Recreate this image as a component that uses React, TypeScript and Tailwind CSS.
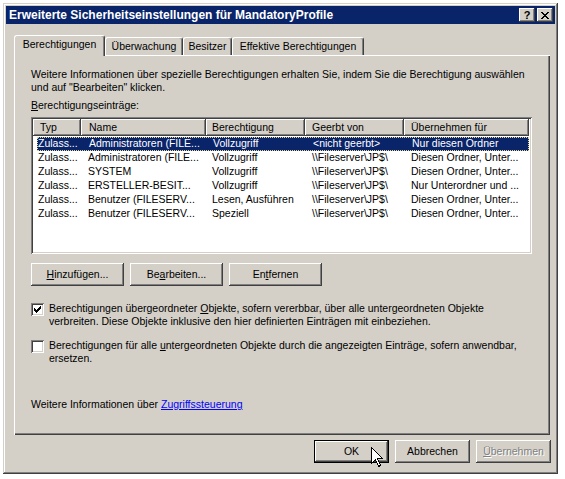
import React from "react";

// classic 3D edges
const raised =
  "shadow-[inset_-1px_-1px_#404040,inset_1px_1px_#ffffff,inset_-2px_-2px_#808080,inset_2px_2px_#d4d0c8]";
const frame =
  "shadow-[inset_-1px_-1px_#404040,inset_1px_1px_#d4d0c8,inset_-2px_-2px_#808080,inset_2px_2px_#ffffff]";
const sunken =
  "shadow-[inset_1px_1px_#808080,inset_-1px_-1px_#ffffff,inset_2px_2px_#404040,inset_-2px_-2px_#d4d0c8]";
const headerCell = "shadow-[inset_-1px_-1px_#404040,inset_1px_1px_#ffffff,inset_-2px_-2px_#808080]";

const rows = [
  ["Zulass...", "Administratoren (FILE...", "Vollzugriff", "<nicht geerbt>", "Nur diesen Ordner"],
  ["Zulass...", "Administratoren (FILE...", "Vollzugriff", "\\\\Fileserver\\JP$\\", "Diesen Ordner, Unter..."],
  ["Zulass...", "SYSTEM", "Vollzugriff", "\\\\Fileserver\\JP$\\", "Diesen Ordner, Unter..."],
  ["Zulass...", "ERSTELLER-BESIT...", "Vollzugriff", "\\\\Fileserver\\JP$\\", "Nur Unterordner und ..."],
  ["Zulass...", "Benutzer (FILESERV...", "Lesen, Ausführen", "\\\\Fileserver\\JP$\\", "Diesen Ordner, Unter..."],
  ["Zulass...", "Benutzer (FILESERV...", "Speziell", "\\\\Fileserver\\JP$\\", "Diesen Ordner, Unter..."],
];

function U({ children }: { children: React.ReactNode }) {
  return <span className="underline underline-offset-[1px]">{children}</span>;
}

function Button({ children, className = "" }: { children: React.ReactNode; className?: string }) {
  return (
    <div className={`h-[23px] bg-[#d4d0c8] flex items-center justify-center ${raised} ${className}`}>
      {children}
    </div>
  );
}

function Checkbox({ checked }: { checked?: boolean }) {
  return (
    <div className={`w-[13px] h-[13px] shrink-0 bg-white flex items-center justify-center ${sunken}`}>
      {checked && (
        <svg width="7" height="7" viewBox="0 0 7 7" shapeRendering="crispEdges">
          <path d="M0 2h1v1h1v1h1v-1h1v-1h1v-1h1v-1h1v3h-1v1h-1v1h-1v1h-1v1h-1v-1h-1v-1h-1v-1h-1z" fill="#000" />
        </svg>
      )}
    </div>
  );
}

function Tab({ label, width, active }: { label: string; width: string; active?: boolean }) {
  return (
    <div
      className={`${width} ${
        active ? "h-[21px] -mb-px relative z-10 pb-[3px]" : "h-[18px]"
      } bg-[#d4d0c8] border-t border-l border-white border-r border-r-[#404040] rounded-t-[3px] shadow-[inset_-1px_0_#808080] flex items-center justify-center whitespace-nowrap`}
    >
      {label}
    </div>
  );
}

export default function App() {
  return (
    <div className="relative w-[565px] h-[479px] bg-white overflow-hidden font-['Liberation_Sans',Arial,sans-serif] text-[10.5px] text-black">
      <div className={`ml-[3px] mt-[3px] w-[555px] h-[471px] bg-[#d4d0c8] p-[3px] flex flex-col ${frame}`}>
        {/* title bar */}
        <div className="h-[18px] shrink-0 bg-[#0a246a] flex items-center pl-[3px] pr-[2px]">
          <span className="flex-1 text-white font-bold text-[12px] leading-none">
            Erweiterte Sicherheitseinstellungen für MandatoryProfile
          </span>
          <div className={`w-[16px] h-[14px] bg-[#d4d0c8] flex items-center justify-center font-bold text-[11px] leading-none ${raised}`}>
            ?
          </div>
          <div className={`ml-[2px] w-[16px] h-[14px] bg-[#d4d0c8] flex items-center justify-center ${raised}`}>
            <svg width="8" height="7" viewBox="0 0 8 7" shapeRendering="crispEdges">
              <path d="M0 0h2v1h1v1h2v-1h1v-1h2v1h-1v1h-1v1h-1v1h1v1h1v1h1v1h-2v-1h-1v-1h-2v1h-1v1h-2v-1h1v-1h1v-1h1v-1h-1v-1h-1v-1h-1z" fill="#000" />
            </svg>
          </div>
        </div>

        {/* tabs */}
        <div className="mt-[11px] ml-[8px] flex items-end h-[20px]">
          <Tab label="Berechtigungen" width="w-[91px]" active />
          <Tab label="Überwachung" width="w-[78px]" />
          <Tab label="Besitzer" width="w-[49px]" />
          <Tab label="Effektive Berechtigungen" width="w-[132px]" />
        </div>

        {/* panel */}
        <div className="ml-[8px] w-[536px] h-[380px] shrink-0 pl-[17px] pt-[13px] shadow-[inset_1px_1px_#ffffff,inset_-1px_-1px_#404040,inset_-2px_-2px_#808080]">
          <p className="leading-[13px] whitespace-nowrap">
            Weitere Informationen über spezielle Berechtigungen erhalten Sie, indem Sie die Berechtigung auswählen
            <br />
            und auf "Bearbeiten" klicken.
          </p>
          <p className="mt-[5px] leading-[13px]">
            <U>B</U>erechtigungseinträge:
          </p>

          {/* list view */}
          <div className={`mt-[5px] w-[501px] h-[137px] bg-white p-[2px] ${sunken}`}>
            <div className="flex h-[17px] leading-[17px] whitespace-nowrap">
              <div className={`w-[48px] pl-[7px] bg-[#d4d0c8] ${headerCell}`}>Typ</div>
              <div className={`w-[125px] pl-[8px] bg-[#d4d0c8] ${headerCell}`}>Name</div>
              <div className={`w-[99px] pl-[6px] bg-[#d4d0c8] ${headerCell}`}>Berechtigung</div>
              <div className={`w-[99px] pl-[7px] bg-[#d4d0c8] ${headerCell}`}>Geerbt von</div>
              <div className={`w-[125px] pl-[7px] bg-[#d4d0c8] ${headerCell}`}>Übernehmen für</div>
            </div>
            <div className="mt-px">
              {rows.map((r, i) => (
                <div
                  key={i}
                  className={`ml-[4px] w-[492px] h-[14px] flex items-center whitespace-nowrap overflow-hidden ${
                    i === 0 ? "bg-[#0a246a] text-white border border-dotted border-[#e6d98a]" : ""
                  }`}
                >
                  <span className={`w-[44px] shrink-0 ${i === 0 ? "pl-0" : "pl-px"}`}>{r[0]}</span>
                  <span className="w-[125px] shrink-0 pl-[7px]">{r[1]}</span>
                  <span className="w-[99px] shrink-0 pl-[6px]">{r[2]}</span>
                  <span className="w-[99px] shrink-0 pl-[7px]">{r[3]}</span>
                  <span className="w-[125px] shrink-0 pl-[7px]">{r[4]}</span>
                </div>
              ))}
            </div>
          </div>

          <div className="mt-[9px] flex gap-[6px]">
            <Button className="w-[93px]">
              <span>
                <U>H</U>inzufügen...
              </span>
            </Button>
            <Button className="w-[93px]">
              <span>
                Be<U>a</U>rbeiten...
              </span>
            </Button>
            <Button className="w-[93px]">
              <span>
                En<U>t</U>fernen
              </span>
            </Button>
          </div>

          <div className="mt-[17px] flex items-start gap-[5px]">
            <Checkbox checked />
            <p className="leading-[13px] whitespace-nowrap -mt-px">
              Berechtigungen übergeordneter <U>O</U>bjekte, sofern vererbbar, über alle untergeordneten Objekte
              <br />
              verbreiten. Diese Objekte inklusive den hier definierten Einträgen mit einbeziehen.
            </p>
          </div>

          <div className="mt-[12px] flex items-start gap-[5px]">
            <Checkbox />
            <p className="leading-[13px] whitespace-nowrap -mt-px">
              Berechtigungen für alle <U>u</U>ntergeordneten Objekte durch die angezeigten Einträge, sofern anwendbar,
              <br />
              ersetzen.
            </p>
          </div>

          <p className="mt-[33px] leading-[13px]">
            Weitere Informationen über{" "}
            <span className="text-[#0000ff] underline underline-offset-[1px]">Zugriffssteuerung</span>
          </p>
        </div>

        {/* dialog buttons */}
        <div className="mt-[5px] pr-[4px] flex justify-end gap-[6px]">
          <div className="w-[75px] h-[23px] border border-black">
            <div className={`w-full h-full flex items-center justify-center ${raised}`}>OK</div>
          </div>
          <Button className="w-[75px]">Abbrechen</Button>
          <Button className="w-[75px] text-[#808080] [text-shadow:1px_1px_0_#ffffff]">
            <span>
              <U>Ü</U>bernehmen
            </span>
          </Button>
        </div>
      </div>

      {/* mouse pointer over OK */}
      <svg
        className="absolute left-[371px] top-[447px]"
        width="12"
        height="20"
        viewBox="0 0 12 20"
        shapeRendering="crispEdges"
      >
        <path d="M0.5 0.5 L0.5 16.5 L4.5 12.5 L7.5 19.5 L9.5 18.5 L6.5 11.5 L11.5 11.5 Z" fill="#ffffff" stroke="#000000" strokeWidth="1" />
      </svg>
    </div>
  );
}
